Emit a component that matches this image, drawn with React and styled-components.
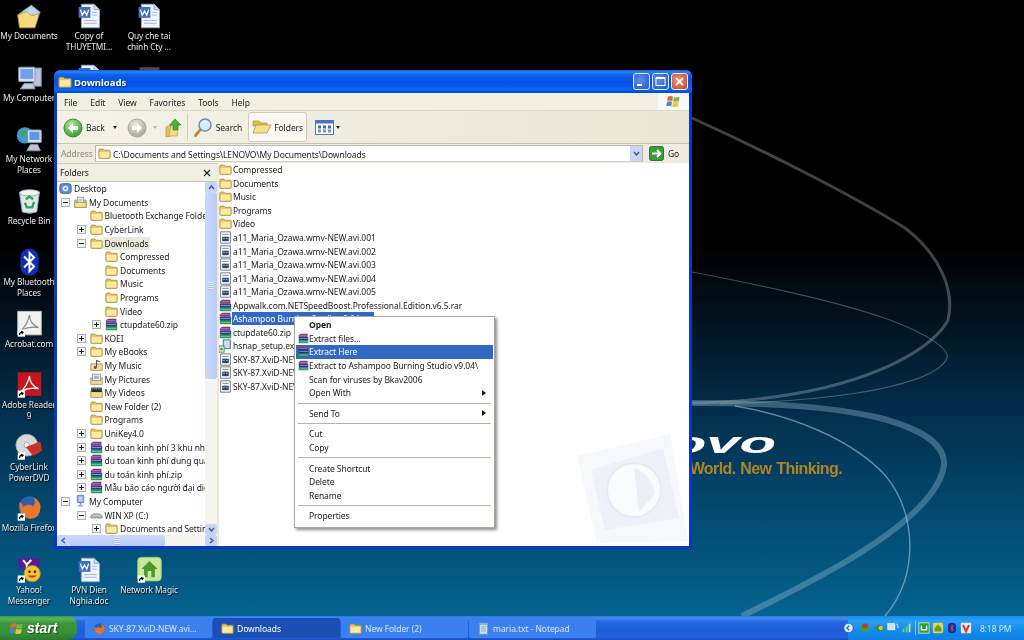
import React from "react";
import styled, { createGlobalStyle } from "styled-components";

const GlobalStyle = createGlobalStyle`
  html, body {
    margin: 0;
    padding: 0;
    background: #000;
  }
  * {
    box-sizing: border-box;
  }
`;

const uiFont = `"Noto Sans", "Liberation Sans", sans-serif`;

const Screen = styled.div`
  width: 1024px;
  height: 640px;
  display: flex;
  flex-direction: column;
  overflow: hidden;
  font-family: ${uiFont};
  font-size: 8.5px;
  letter-spacing: -0.07px;
  color: #1c1c1c;
  filter: blur(0.3px);
`;

const Desktop = styled.div`
  position: relative;
  flex: 1;
  background: linear-gradient(
    180deg,
    #000 0%,
    #000 40%,
    #021523 53%,
    #02304f 68%,
    #034a72 84%,
    #05638f 100%
  );
`;

const Wallpaper = styled.svg`
  position: absolute;
  left: 0;
  top: 0;
`;

const DeskIcon = styled.div`
  position: absolute;
  left: ${(p) => p.$x}px;
  top: ${(p) => p.$y}px;
  width: 58px;
  display: flex;
  flex-direction: column;
  align-items: center;
`;

const DeskLabel = styled.div`
  color: #e4e8ea;
  font-size: 8.3px;
  letter-spacing: -0.1px;
  line-height: 10.6px;
  text-align: center;
  white-space: nowrap;
  text-shadow: 1px 1px 1px #000;
`;

/* window */
const Win = styled.div`
  position: absolute;
  left: 54px;
  top: 70px;
  width: 638px;
  height: 479px;
  display: flex;
  flex-direction: column;
  background: #0a37c4;
  border-radius: 6px 6px 0 0;
  padding: 0 3px 3px;
`;

const TitleBar = styled.div`
  height: 23px;
  margin: 0 -3px;
  padding: 0 4px;
  display: flex;
  align-items: center;
  gap: 2px;
  border-radius: 6px 6px 0 0;
  background: linear-gradient(
    180deg,
    #0a53e0 0%,
    #2c86f5 8%,
    #0e62ec 20%,
    #0452e2 50%,
    #0559ef 72%,
    #0667fa 84%,
    #0349cc 100%
  );
`;

const TitleText = styled.div`
  flex: 1;
  padding-top: 2px;
  color: #fff;
  font-size: 9.5px;
  font-weight: 700;
  letter-spacing: 0;
  text-shadow: 1px 1px 1px #0a2a80;
`;

const WinButton = styled.div`
  width: 17px;
  height: 17px;
  border: 1px solid #e6eefc;
  border-radius: 3px;
  display: flex;
  align-items: center;
  justify-content: center;
  background: ${(p) =>
    p.$close
      ? "radial-gradient(circle at 40% 40%, #ea9170, #d5552e 80%)"
      : "radial-gradient(circle at 40% 40%, #5f90ee, #2a5fd8 80%)"};
`;

const MenuBar = styled.div`
  height: 18px;
  display: flex;
  align-items: center;
  padding-left: 7px;
  gap: 13px;
  background: #f1eee2;
  border-bottom: 1px solid #dcd8c6;
`;

const MenuLabel = styled.span`
  padding-top: 1px;
  color: #222;
`;

const LogoBox = styled.div`
  margin-left: auto;
  width: 31px;
  height: 100%;
  display: flex;
  align-items: center;
  justify-content: center;
  background: #fbfaf6;
`;

const Toolbar = styled.div`
  height: 33px;
  display: flex;
  align-items: center;
  padding-left: 6px;
  background: linear-gradient(90deg, #f4f2e8, #eeeadc 60%, #ebe7d6);
  border-bottom: 1px solid #c9c6b6;
`;

const ToolItem = styled.div`
  display: flex;
  align-items: center;
  gap: ${(p) => p.$gap ?? 3}px;
  margin-left: ${(p) => p.$ml ?? 0}px;
  padding-top: 1px;
  color: ${(p) => (p.$dim ? "#99978a" : "#222")};
`;

const ToolDivider = styled.div`
  width: 1px;
  height: 26px;
  margin-left: 5px;
  background: #d3cfbd;
`;

const PressedTool = styled.div`
  height: 30px;
  width: 59px;
  margin-left: 6px;
  display: flex;
  align-items: center;
  justify-content: center;
  gap: 2px;
  background: #f9f8f3;
  border: 1px solid #cfccbb;
  border-radius: 3px;
`;

const Caret = styled.span`
  width: 0;
  height: 0;
  border-left: 2.5px solid transparent;
  border-right: 2.5px solid transparent;
  border-top: 3px solid ${(p) => (p.$dim ? "#b5b3a6" : "#222")};
`;

const AddressBar = styled.div`
  height: 19px;
  display: flex;
  align-items: center;
  padding-left: 4px;
  background: #efecdf;
`;

const AddressLabel = styled.span`
  color: #8c8a7d;
  width: 34px;
`;

const AddressInput = styled.div`
  width: 548px;
  height: 17px;
  display: flex;
  align-items: center;
  gap: 2px;
  padding-left: 2px;
  background: #fff;
  border: 1px solid #b9b8ab;
  border-bottom-color: #cfcec4;
`;

const AddressText = styled.span`
  flex: 1;
  padding-top: 1px;
  color: #222;
`;

const DropButton = styled.div`
  width: 12px;
  height: 15px;
  display: flex;
  align-items: center;
  justify-content: center;
  background: #c9d6f4;
`;

const GoButton = styled.div`
  margin-left: 6px;
  display: flex;
  align-items: center;
  gap: 4px;
  color: #222;
`;

const Content = styled.div`
  position: relative;
  flex: 1;
  min-height: 0;
  display: flex;
  background: #fff;
`;

const FolderPane = styled.div`
  width: 160px;
  display: flex;
  flex-direction: column;
  background: #fff;
`;

const PaneHeader = styled.div`
  height: 19px;
  display: flex;
  align-items: center;
  justify-content: space-between;
  padding: 0 6px 0 3px;
  background: #f1eee2;
  border-top: 1px solid #cbcabe;
  border-bottom: 1px solid #c9c6b6;
`;

const PaneBody = styled.div`
  flex: 1;
  min-height: 0;
  display: flex;
`;

const Tree = styled.div`
  flex: 1;
  min-width: 0;
  overflow: hidden;
`;

const TreeRow = styled.div`
  height: 13.6px;
  display: flex;
  align-items: center;
  white-space: nowrap;
  padding-left: ${(p) => (p.$level === 0 ? 2 : 4 + 15.5 * (p.$level - 1))}px;
`;

const ToggleSlot = styled.div`
  width: 9px;
  height: 9px;
  margin-right: 4px;
  flex: none;
`;

const Toggle = styled.div`
  width: 9px;
  height: 9px;
  display: flex;
  align-items: center;
  justify-content: center;
  border: 1px solid #a9b0b8;
  background: #f4f3ee;
  color: #222;
`;

const NodeLabel = styled.span`
  padding: 0 2px;
  line-height: 13px;
  background: ${(p) => (p.$active ? "#ebe8da" : "transparent")};
`;

const VBar = styled.div`
  width: 12px;
  display: flex;
  flex-direction: column;
  background: #f5f4ee;
`;

const ScrollBtn = styled.div`
  height: ${(p) => p.$size ?? 11}px;
  width: ${(p) => (p.$wide ? "12px" : "auto")};
  flex: none;
  display: flex;
  align-items: center;
  justify-content: center;
  background: #c5d4fa;
  border-radius: 2px;
`;

const VThumb = styled.div`
  height: 186px;
  background: linear-gradient(90deg, #c9d8fd, #b9ccf8);
  border-radius: 2px;
  display: flex;
  align-items: center;
  justify-content: center;
`;

const Grip = styled.div`
  width: 6px;
  height: 8px;
  background: repeating-linear-gradient(180deg, #e8eefe 0 1px, #aabef0 1px 2px);
`;

const HBar = styled.div`
  height: 11px;
  display: flex;
  background: #f5f4ee;
`;

const HThumb = styled.div`
  width: 96px;
  background: linear-gradient(180deg, #c9d8fd, #b9ccf8);
  border-radius: 2px;
  display: flex;
  align-items: center;
  justify-content: center;
`;

const HTrack = styled.div`
  flex: 1;
`;

const Splitter = styled.div`
  width: 2px;
  background: #ece9d8;
`;

const FileList = styled.div`
  position: relative;
  flex: 1;
  overflow: hidden;
`;

const FileRow = styled.div`
  height: 13.55px;
  display: flex;
  align-items: center;
  white-space: nowrap;
`;

const FileName = styled.span`
  padding: 0 1px;
  line-height: 13px;
  color: ${(p) => (p.$selected ? "#fff" : "#1c1c1c")};
  background: ${(p) => (p.$selected ? "#316ac5" : "transparent")};
`;

const Watermark = styled.svg`
  position: absolute;
  right: 0;
  bottom: 0;
`;

/* context menu */
const ContextMenu = styled.div`
  position: absolute;
  left: 240px;
  top: 246px;
  width: 201px;
  padding: 1px 1px 4px;
  background: #fff;
  border: 1px solid #a9a79a;
  box-shadow: 2px 2px 3px rgba(0, 0, 0, 0.45);
`;

const MenuItem = styled.div`
  height: 13.6px;
  display: flex;
  align-items: center;
  padding-left: 13px;
  padding-right: 7px;
  white-space: nowrap;
  font-weight: ${(p) => (p.$bold ? 700 : 400)};
  background: ${(p) => (p.$hot ? "#316ac5" : "transparent")};
  color: ${(p) => (p.$hot ? "#fff" : "#1c1c1c")};
`;

const MenuGlyph = styled.div`
  width: 11px;
  margin-left: -11px;
  display: flex;
`;

const SubArrow = styled.span`
  margin-left: auto;
  width: 0;
  height: 0;
  border-top: 3px solid transparent;
  border-bottom: 3px solid transparent;
  border-left: 4px solid #111;
`;

const MenuSep = styled.div`
  height: 1px;
  margin: 3px 2px;
  background: #b7b5a8;
`;

/* taskbar */
const Taskbar = styled.div`
  height: 24px;
  flex: none;
  display: flex;
  align-items: stretch;
  background: linear-gradient(
    180deg,
    #2f78e8 0%,
    #3f8cf2 10%,
    #2467e0 24%,
    #1f5ed8 60%,
    #2262de 88%,
    #1a4dbd 100%
  );
`;

const StartButton = styled.div`
  width: 77px;
  display: flex;
  align-items: center;
  gap: 3px;
  padding-left: 9px;
  border-radius: 0 9px 9px 0;
  background: linear-gradient(180deg, #3f9a45 0%, #58b558 12%, #3c963e 30%, #37913a 70%, #2b7a30 100%);
  color: #fff;
  font-family: "Liberation Sans", sans-serif;
  font-size: 14px;
  letter-spacing: 0;
  font-weight: 700;
  font-style: italic;
  text-shadow: 1px 1px 1px #1a4a1a;
`;

const TaskList = styled.div`
  flex: 1;
  display: flex;
  align-items: center;
  padding-left: 8px;
  gap: 1px;
`;

const TaskButton = styled.div`
  width: 127px;
  height: 20px;
  display: flex;
  align-items: center;
  gap: 3px;
  padding-left: 8px;
  border-radius: 2px;
  color: ${(p) => (p.$active ? "#fff" : "#d7e5fb")};
  background: ${(p) => (p.$active ? "#1c4fb4" : "#3b80f0")};
`;

const Tray = styled.div`
  width: 176px;
  display: flex;
  align-items: center;
  gap: 2px;
  background: linear-gradient(180deg, #1a8cf0 0%, #27a0f7 20%, #128ceb 60%, #0f7fe0 100%);
`;

const TrayArrow = styled.svg`
  margin-left: -5px;
  margin-right: 3px;
  flex: none;
`;

const TraySep = styled.div`
  width: 1px;
  height: 14px;
  background: #7cc0f4;
`;

const Clock = styled.span`
  margin-left: 6px;
  white-space: nowrap;
  color: #d3e8fb;
`;

/* ---- drawings ---- */
const Folder = ({ s = 13 }) => (
  <svg width={s} height={s} viewBox="0 0 16 16" style={{ flex: "none" }}>
    <path d="M1 4 Q1 2.5 2.5 2.5 H6 L7.5 4 H14 Q15 4 15 5 V13 Q15 14 14 14 H2 Q1 14 1 13 Z" fill="#e9c25a" stroke="#a98a3c" />
    <path d="M2 6 H14 V13 H2 Z" fill="#fbe9a6" />
  </svg>
);

const Rar = ({ s = 13 }) => (
  <svg width={s} height={s} viewBox="0 0 16 16" style={{ flex: "none" }}>
    <path d="M1 3 L4 1 H14 V5 H1 Z" fill="#8a2a86" />
    <rect x="1" y="5.7" width="14" height="4.5" rx="1" fill="#2a3fa8" />
    <rect x="1" y="10.5" width="14" height="4.5" rx="1" fill="#1f9a58" />
    <path d="M2 3.4 H13 M2 8 H14 M2 12.8 H14" stroke="#e4e6d8" strokeWidth=".6" />
    <path d="M1 5.4 H14 M1 10.3 H15" stroke="#111" strokeWidth=".7" />
  </svg>
);

const AviFile = () => (
  <svg width="13" height="13" viewBox="0 0 16 16" style={{ flex: "none" }}>
    <path d="M2 1 H14 V15 H2 Z" fill="#fdfdfd" stroke="#5a6270" />
    <rect x="4" y="3.5" width="8" height="1.2" fill="#7c8aa0" />
    <rect x="4" y="7" width="8" height="5.5" fill="#2f4470" />
    <rect x="5.5" y="8.5" width="1.3" height="1.3" fill="#e8eefc" />
    <rect x="9" y="8.5" width="1.3" height="1.3" fill="#e8eefc" />
  </svg>
);

const SetupFile = () => (
  <svg width="14" height="14" viewBox="0 0 16 16" style={{ flex: "none", marginLeft: -1 }}>
    <rect x="6" y="1" width="8" height="10" fill="#cfe0f6" stroke="#44608c" />
    <rect x="1" y="8" width="6" height="7" fill="#eef4e4" stroke="#4a7a3a" />
    <circle cx="4" cy="11.5" r="1.6" fill="#3da04a" />
  </svg>
);

const DocsFolder = () => (
  <svg width="13" height="13" viewBox="0 0 16 16" style={{ flex: "none" }}>
    <path d="M1 5 H15 V14 H1 Z" fill="#efd17c" stroke="#a98a3c" />
    <rect x="4" y="1.5" width="8" height="9" fill="#f7f9fd" stroke="#7d8ca6" />
    <path d="M5.5 4 H10.5 M5.5 6 H10.5" stroke="#8ea3c7" />
    <path d="M1 8 H15 V14 H1 Z" fill="#f6e3a0" stroke="#a98a3c" />
  </svg>
);

const MusicFolder = () => (
  <svg width="13" height="13" viewBox="0 0 16 16" style={{ flex: "none" }}>
    <path d="M1 6 H15 V14 H1 Z" fill="#f3dc8e" stroke="#a98a3c" />
    <path d="M8 10 V2 L12 3.5" fill="none" stroke="#4a4f78" strokeWidth="1.3" />
    <circle cx="6.5" cy="10.5" r="1.8" fill="#4a4f78" />
  </svg>
);

const PicsFolder = () => (
  <svg width="13" height="13" viewBox="0 0 16 16" style={{ flex: "none" }}>
    <path d="M1 6 H15 V14 H1 Z" fill="#f3dc8e" stroke="#a98a3c" />
    <rect x="3" y="1.5" width="10" height="8" fill="#e6eef8" stroke="#7d8ca6" />
    <rect x="5" y="3.5" width="6" height="4" fill="#9db7dc" />
  </svg>
);

const VideosFolder = () => (
  <svg width="13" height="13" viewBox="0 0 16 16" style={{ flex: "none" }}>
    <path d="M1 6 H15 V14 H1 Z" fill="#f3dc8e" stroke="#a98a3c" />
    <rect x="1.5" y="2" width="13" height="5.5" fill="#2c2c2c" />
    <path d="M3 3.5 H13" stroke="#eee" strokeDasharray="1.2 1" />
  </svg>
);

const SmallComputer = () => (
  <svg width="13" height="14" viewBox="0 0 16 16" style={{ flex: "none" }}>
    <rect x="4" y="1" width="8" height="9" rx="1" fill="#7fa8e8" stroke="#5a79b0" />
    <rect x="5.5" y="2.5" width="5" height="6" fill="#b9d4fa" />
    <path d="M4 13 H12 L10 15 H6 Z" fill="#a9b2c0" />
    <rect x="7" y="10" width="2" height="3" fill="#8a94a6" />
  </svg>
);

const Drive = () => (
  <svg width="13" height="13" viewBox="0 0 16 16" style={{ flex: "none" }}>
    <path d="M1 9 L4 6 H12 L15 9 V11 H1 Z" fill="#c3c6c9" stroke="#7b7f84" />
    <path d="M2 10 H14" stroke="#8f9498" />
  </svg>
);

const DesktopGlyph = () => (
  <svg width="13" height="13" viewBox="0 0 16 16" style={{ flex: "none" }}>
    <rect x="1" y="2" width="14" height="12" rx="3" fill="#5d8fd0" stroke="#35598f" />
    <circle cx="8" cy="8" r="3.4" fill="#eef4fc" />
    <circle cx="8" cy="8" r="1.5" fill="#5d8fd0" />
  </svg>
);

const Chevron = ({ d = "up", c = "#4d6185" }) => {
  const points = {
    up: "2,6 4.5,3 7,6",
    down: "2,3 4.5,6 7,3",
    left: "6,2 3,4.5 6,7",
    right: "3,2 6,4.5 3,7",
  };
  return (
    <svg width="9" height="9" viewBox="0 0 9 9">
      <polyline points={points[d]} fill="none" stroke={c} strokeWidth="1.6" />
    </svg>
  );
};

const WinFlag = ({ s = 14 }) => (
  <svg width={s} height={s} viewBox="0 0 16 16" style={{ flex: "none" }}>
    <path d="M2 3 Q5 1.5 7.5 3 L6.6 7.6 Q4 6.4 1.2 7.6 Z" fill="#e2683a" />
    <path d="M8.4 3.2 Q11 4.6 14.6 2.6 L13.8 7.4 Q10.8 8.8 7.6 7.8 Z" fill="#7ab648" />
    <path d="M1 8.4 Q4 7.2 6.4 8.4 L5.6 13 Q3 11.8 .2 13 Z" fill="#4a86d8" />
    <path d="M7.4 8.6 Q10.6 9.6 13.6 8.2 L12.8 13 Q9.8 14.4 6.6 13.2 Z" fill="#f2c43a" />
  </svg>
);

const NavCircle = ({ on, flip }) => (
  <svg width="20" height="20" viewBox="0 0 20 20" style={{ flex: "none" }}>
    <defs>
      <radialGradient id={on ? "navOn" : "navOff"} cx="40%" cy="30%" r="75%">
        <stop offset="0" stopColor={on ? "#b4eaa0" : "#e8e8e4"} />
        <stop offset="1" stopColor={on ? "#2e9a2a" : "#a3a39f"} />
      </radialGradient>
    </defs>
    <circle cx="10" cy="10" r="9" fill={`url(#${on ? "navOn" : "navOff"})`} stroke={on ? "#3c8a36" : "#a6a6a2"} />
    <path
      d={flip ? "M10 5 L15 10 L10 15 V12 H5 V8 H10 Z" : "M10 5 L5 10 L10 15 V12 H15 V8 H10 Z"}
      fill="#fff"
    />
  </svg>
);

const UpFolder = () => (
  <svg width="18" height="20" viewBox="0 0 18 20" style={{ flex: "none" }}>
    <path d="M2 9 L7 7 V18 L2 19 Z" fill="#e9c25a" stroke="#a98a3c" strokeWidth=".6" />
    <path d="M7 7 H15 L13 18 H5 Z" fill="#f6de8e" stroke="#a98a3c" strokeWidth=".6" />
    <path d="M11 1 L17 7 H13.5 V12 H9 V7 H5.5 Z" fill="#4db03c" stroke="#2a7a22" strokeWidth=".6" />
  </svg>
);

const SearchGlyph = () => (
  <svg width="21" height="21" viewBox="0 0 21 21" style={{ flex: "none" }}>
    <path d="M7 13 L2.5 18.5" stroke="#c08a4a" strokeWidth="3" strokeLinecap="round" />
    <circle cx="12" cy="8" r="6" fill="#d7ecfa" stroke="#6f90b4" strokeWidth="1.6" />
    <path d="M9 6 Q11 4 14 5" stroke="#fff" fill="none" />
  </svg>
);

const FoldersGlyph = () => (
  <svg width="20" height="18" viewBox="0 0 20 18" style={{ flex: "none" }}>
    <path d="M1 3 H7 L9 5 H15 V8 H1 Z" fill="#e4bc55" stroke="#a98a3c" strokeWidth=".7" />
    <path d="M1 15 L4 7 H19 L15 15 Z" fill="#f8e08f" stroke="#a98a3c" strokeWidth=".7" />
  </svg>
);

const ViewsGlyph = () => (
  <svg width="19" height="15" viewBox="0 0 19 15" style={{ flex: "none" }}>
    <rect x=".5" y=".5" width="18" height="14" fill="#fbfbf7" stroke="#4d78b8" />
    <rect x=".5" y=".5" width="18" height="3" fill="#3f74c6" />
    {[3, 8, 13].map((x) =>
      [5.5, 9.5].map((y) => (
        <rect key={`${x}-${y}`} x={x} y={y} width="3" height="3" fill={y < 7 ? "#4a62c4" : "#7c8fd6"} />
      ))
    )}
  </svg>
);

const GoGlyph = () => (
  <svg width="15" height="15" viewBox="0 0 15 15" style={{ flex: "none" }}>
    <rect x=".5" y=".5" width="14" height="14" rx="2" fill="#3a9a3c" stroke="#2a7a30" />
    <path d="M3 7.5 H11 M8 4 L11.5 7.5 L8 11" fill="none" stroke="#fff" strokeWidth="1.8" />
  </svg>
);

const Shortcut = () => (
  <g>
    <rect x="3" y="22" width="8" height="8" fill="#fff" />
    <path d="M5 28 Q5 25 8 25 M6.5 24 L9 25 L7.5 27" stroke="#000" strokeWidth="1.2" fill="none" />
  </g>
);

const Big = ({ children }) => (
  <svg width="29" height="30" viewBox="0 0 32 32" style={{ flex: "none" }}>
    {children}
  </svg>
);

const BigMyDocs = () => (
  <Big>
    <path d="M4 14 L18 4 L28 12 L14 22 Z" fill="#bcd6f2" stroke="#7d9cc4" />
    <path d="M3 15 L13 11 L18 16 L27 13 L22 29 L5 29 Z" fill="#f6da80" stroke="#b89a46" />
  </Big>
);

const BigWord = () => (
  <Big>
    <path d="M7 3 H21 L27 9 V29 H7 Z" fill="#f2f5fb" stroke="#8fa2c4" />
    <path d="M21 3 V9 H27" fill="#cdd9ee" stroke="#8fa2c4" />
    <rect x="4" y="6" width="13" height="12" fill="#3f6ec4" />
    <path d="M6 9 L8 15 L10.5 10.5 L13 15 L15 9" fill="none" stroke="#fff" strokeWidth="1.4" />
    <path d="M10 21 H24 M10 24 H24 M19 12 H24 M19 15 H24" stroke="#9db0d2" />
  </Big>
);

const BigComputer = () => (
  <Big>
    <rect x="20" y="5" width="9" height="20" fill="#b9c3d9" stroke="#7f8aa3" />
    <rect x="4" y="4" width="18" height="16" rx="1" fill="#d9e2f2" stroke="#8492ad" />
    <rect x="6" y="6" width="14" height="11" fill="#6fa2e8" />
    <path d="M6 28 L10 22 H20 L22 28 Z" fill="#c5cde0" stroke="#8492ad" />
  </Big>
);

const BigNetwork = () => (
  <Big>
    <circle cx="11" cy="12" r="9" fill="#3f9ad8" />
    <path d="M5 8 Q10 5 13 9 Q10 14 6 12 Z M12 16 Q17 14 16 19 L12 20 Z" fill="#46a64a" />
    <rect x="14" y="6" width="15" height="14" rx="1" fill="#d9e2f2" stroke="#8492ad" />
    <rect x="16" y="8" width="11" height="9" fill="#5f97e4" />
    <path d="M13 29 L17 22 H25 L28 29 Z" fill="#b9c3d9" stroke="#8492ad" />
  </Big>
);

const BigBin = () => (
  <Big>
    <path d="M5 7 Q15 2 27 6 L24 28 Q16 31 8 28 Z" fill="#d9e8f0" stroke="#93aabb" />
    <ellipse cx="16" cy="7" rx="11" ry="3.5" fill="#eef5f8" stroke="#93aabb" />
    <path d="M12 14 L16 11 L20 14 M21 17 L19 23 H13 L11 18" fill="none" stroke="#3aa04a" strokeWidth="2.6" />
  </Big>
);

const BigBluetooth = () => (
  <Big>
    <rect x="6" y="1" width="20" height="30" rx="10" fill="#0f2fb8" />
    <path d="M10 10 L21 21 L16 26 V6 L21 11 L10 22" fill="none" stroke="#fff" strokeWidth="2.2" />
  </Big>
);

const BigAcrobat = () => (
  <Big>
    <rect x="3" y="2" width="26" height="26" fill="#f1f1ee" stroke="#bdbdb8" />
    <path d="M7 23 Q14 16 16 6 Q16 16 26 20 Q16 18 7 23 Z" fill="none" stroke="#8a8a86" strokeWidth="1.3" />
    <Shortcut />
  </Big>
);

const BigReader = () => (
  <Big>
    <rect x="3" y="2" width="26" height="26" fill="#c4161c" />
    <path d="M7 23 Q14 16 16 6 Q16 16 26 20 Q16 18 7 23 Z" fill="none" stroke="#fff" strokeWidth="1.4" />
    <Shortcut />
  </Big>
);

const BigDvd = () => (
  <Big>
    <circle cx="13" cy="14" r="12" fill="#d6d8dc" stroke="#9ea2a8" />
    <circle cx="13" cy="14" r="3" fill="#fff" stroke="#9ea2a8" />
    <path d="M12 16 L28 10 L30 20 L20 26 Z" fill="#c8322a" />
    <Shortcut />
  </Big>
);

const BigFirefox = () => (
  <Big>
    <circle cx="16" cy="15" r="12" fill="#2c5fae" />
    <path d="M5 10 Q4 26 17 28 Q29 27 28 13 Q26 6 20 4 Q24 10 20 14 Q14 10 9 15 Q9 11 5 10 Z" fill="#e8782a" />
    <Shortcut />
  </Big>
);

const BigYahoo = () => (
  <Big>
    <path d="M3 3 H28 L26 14 H5 Z" fill="#5a1a96" />
    <path d="M9 5 L13 10 L18 5 M13 10 V15" stroke="#fff" strokeWidth="2.2" fill="none" />
    <circle cx="19" cy="20" r="9" fill="#f6c52e" stroke="#b5831a" />
    <circle cx="16" cy="18" r="1.4" fill="#222" />
    <circle cx="22" cy="18" r="1.4" fill="#222" />
    <path d="M14 22 Q19 27 24 22 Z" fill="#c8322a" />
    <Shortcut />
  </Big>
);

const BigMagic = () => (
  <Big>
    <rect x="3" y="2" width="26" height="26" rx="4" fill="#c8e89a" stroke="#9cc46e" />
    <path d="M7 15 L16 6 L25 15 H22 V24 H18 V17 H14 V24 H10 V15 Z" fill="#4e9a2c" />
    <Shortcut />
  </Big>
);

const BigDim = () => (
  <Big>
    <rect x="5" y="3" width="22" height="26" fill="#4a4a4c" />
  </Big>
);

const FireGlyph = () => (
  <svg width="13" height="13" viewBox="0 0 16 16" style={{ flex: "none" }}>
    <circle cx="8" cy="8" r="6.5" fill="#2c5fae" />
    <path d="M2 6 Q1 14 8 15 Q15 14 14.5 7 Q13 3 10 2 Q12 6 9 7.5 Q6 5 4 8 Q4 6 2 6 Z" fill="#e8702a" />
  </svg>
);

const NoteGlyph = () => (
  <svg width="13" height="13" viewBox="0 0 16 16" style={{ flex: "none" }}>
    <path d="M3 2 H13 V15 H3 Z" fill="#cfe4f7" stroke="#6d94c0" />
    <rect x="3" y="1" width="10" height="2.5" fill="#7fb4e6" />
    <path d="M5 6 H11 M5 8.5 H11 M5 11 H11" stroke="#7d97b8" />
  </svg>
);

const TrayIcon = ({ children }) => (
  <svg width="12" height="14" viewBox="0 0 14 14" style={{ flex: "none" }}>
    {children}
  </svg>
);

/* ---- data ---- */
const deskIcons = [
  { x: 0, y: 1, Icon: BigMyDocs, lines: ["My Documents"] },
  { x: 60, y: 1, Icon: BigWord, lines: ["Copy of", "THUYETMI..."] },
  { x: 120, y: 1, Icon: BigWord, lines: ["Quy che tai", "chinh Cty ..."] },
  { x: 0, y: 63, Icon: BigComputer, lines: ["My Computer"] },
  { x: 60, y: 62, Icon: BigWord, lines: [] },
  { x: 120, y: 64, Icon: BigDim, lines: [] },
  { x: 0, y: 124, Icon: BigNetwork, lines: ["My Network", "Places"] },
  { x: 0, y: 186, Icon: BigBin, lines: ["Recycle Bin"] },
  { x: 0, y: 247, Icon: BigBluetooth, lines: ["My Bluetooth", "Places"] },
  { x: 0, y: 309, Icon: BigAcrobat, lines: ["Acrobat.com"] },
  { x: 0, y: 370, Icon: BigReader, lines: ["Adobe Reader", "9"] },
  { x: 0, y: 432, Icon: BigDvd, lines: ["CyberLink", "PowerDVD"] },
  { x: 0, y: 493, Icon: BigFirefox, lines: ["Mozilla Firefox"] },
  { x: 0, y: 555, Icon: BigYahoo, lines: ["Yahoo!", "Messenger"] },
  { x: 60, y: 555, Icon: BigWord, lines: ["PVN Dien", "Nghia.doc"] },
  { x: 120, y: 555, Icon: BigMagic, lines: ["Network Magic"] },
];

const treeRows = [
  { level: 0, Icon: DesktopGlyph, label: "Desktop" },
  { level: 1, toggle: "-", Icon: DocsFolder, label: "My Documents" },
  { level: 2, Icon: Folder, label: "Bluetooth Exchange Folder" },
  { level: 2, toggle: "+", Icon: Folder, label: "CyberLink" },
  { level: 2, toggle: "-", Icon: Folder, label: "Downloads", active: true },
  { level: 3, Icon: Folder, label: "Compressed" },
  { level: 3, Icon: Folder, label: "Documents" },
  { level: 3, Icon: Folder, label: "Music" },
  { level: 3, Icon: Folder, label: "Programs" },
  { level: 3, Icon: Folder, label: "Video" },
  { level: 3, toggle: "+", Icon: Rar, label: "ctupdate60.zip" },
  { level: 2, toggle: "+", Icon: Folder, label: "KOEI" },
  { level: 2, toggle: "+", Icon: Folder, label: "My eBooks" },
  { level: 2, Icon: MusicFolder, label: "My Music" },
  { level: 2, Icon: PicsFolder, label: "My Pictures" },
  { level: 2, Icon: VideosFolder, label: "My Videos" },
  { level: 2, Icon: Folder, label: "New Folder (2)" },
  { level: 2, Icon: Folder, label: "Programs" },
  { level: 2, toggle: "+", Icon: Folder, label: "UniKey4.0" },
  { level: 2, toggle: "+", Icon: Rar, label: "du toan kinh phí 3 khu nhà" },
  { level: 2, toggle: "+", Icon: Rar, label: "du toan kinh phí dung quất" },
  { level: 2, toggle: "+", Icon: Rar, label: "du toán kinh phí.zip" },
  { level: 2, toggle: "+", Icon: Rar, label: "Mẫu báo cáo người đại diện" },
  { level: 1, toggle: "-", Icon: SmallComputer, label: "My Computer" },
  { level: 2, toggle: "-", Icon: Drive, label: "WIN XP (C:)" },
  { level: 3, toggle: "+", Icon: Folder, label: "Documents and Settings" },
];

const files = [
  { Icon: Folder, name: "Compressed" },
  { Icon: Folder, name: "Documents" },
  { Icon: Folder, name: "Music" },
  { Icon: Folder, name: "Programs" },
  { Icon: Folder, name: "Video" },
  { Icon: AviFile, name: "a11_Maria_Ozawa.wmv-NEW.avi.001" },
  { Icon: AviFile, name: "a11_Maria_Ozawa.wmv-NEW.avi.002" },
  { Icon: AviFile, name: "a11_Maria_Ozawa.wmv-NEW.avi.003" },
  { Icon: AviFile, name: "a11_Maria_Ozawa.wmv-NEW.avi.004" },
  { Icon: AviFile, name: "a11_Maria_Ozawa.wmv-NEW.avi.005" },
  { Icon: Rar, name: "Appwalk.com.NETSpeedBoost.Professional.Edition.v6.5.rar" },
  { Icon: Rar, name: "Ashampoo Burning Studio v9.04.rar", selected: true },
  { Icon: Rar, name: "ctupdate60.zip" },
  { Icon: SetupFile, name: "hsnap_setup.exe" },
  { Icon: AviFile, name: "SKY-87.XviD-NEW.avi.001" },
  { Icon: AviFile, name: "SKY-87.XviD-NEW.avi.002" },
  { Icon: AviFile, name: "SKY-87.XviD-NEW.avi.003" },
];

const menuItems = [
  { label: "Open", bold: true },
  { label: "Extract files...", rar: true },
  { label: "Extract Here", rar: true, hot: true },
  { label: "Extract to Ashampoo Burning Studio v9.04\\", rar: true },
  { label: "Scan for viruses by Bkav2006" },
  { label: "Open With", sub: true },
  { sep: true },
  { label: "Send To", sub: true },
  { sep: true },
  { label: "Cut" },
  { label: "Copy" },
  { sep: true },
  { label: "Create Shortcut" },
  { label: "Delete" },
  { label: "Rename" },
  { sep: true },
  { label: "Properties" },
];

const tasks = [
  { Icon: FireGlyph, label: "SKY-87.XviD-NEW.avi..." },
  { Icon: Folder, label: "Downloads", active: true },
  { Icon: Folder, label: "New Folder (2)" },
  { Icon: NoteGlyph, label: "maria.txt - Notepad" },
];

const WallpaperArt = () => (
  <Wallpaper width="1024" height="616" viewBox="0 0 1024 616">
    <path
      d="M692 118 C780 158 860 200 905 228 C940 255 955 290 948 320 C935 345 890 372 823 388 C780 398 730 403 692 403"
      fill="none"
      stroke="#bfc7cc"
      strokeOpacity=".33"
      strokeWidth="3"
    />
    <path
      d="M692 272 C760 285 840 302 890 320 C930 335 950 350 947 358 C940 375 900 386 857 393 C810 400 760 403 720 404"
      fill="none"
      stroke="#c9d3d9"
      strokeOpacity=".32"
      strokeWidth="1.2"
    />
    <path
      d="M692 403 C760 403 825 405 880 418 C925 430 945 445 944 465 C940 495 900 530 840 565 C810 582 775 600 742 616"
      fill="none"
      stroke="#a8c8da"
      strokeOpacity=".34"
      strokeWidth="6"
    />
    <path
      d="M735 406 C790 415 850 438 885 475 C910 505 915 545 905 580 C900 595 892 608 885 616"
      fill="none"
      stroke="#a8d0e4"
      strokeOpacity=".55"
      strokeWidth="1.4"
    />
    <text
      transform="translate(776 453) scale(2 1)"
      textAnchor="end"
      fontFamily="Liberation Sans"
      fontWeight="700"
      fontStyle="italic"
      fontSize="30"
      fill="#fff"
    >
      lenovo
    </text>
    <text
      x="842"
      y="474"
      textAnchor="end"
      fontFamily="Liberation Sans"
      fontWeight="700"
      fontSize="16"
      letterSpacing="-.6"
      wordSpacing="1"
      fill="#b08420"
    >
      New World. New Thinking.
    </text>
  </Wallpaper>
);

const TreeNode = ({ level, toggle, Icon, label, active }) => (
  <TreeRow $level={level}>
    {level > 0 && (
      <ToggleSlot>
        {toggle && (
          <Toggle>
            <svg width="7" height="7" viewBox="0 0 7 7">
              <path d={toggle === "+" ? "M1 3.5 H6 M3.5 1 V6" : "M1 3.5 H6"} stroke="#222" />
            </svg>
          </Toggle>
        )}
      </ToggleSlot>
    )}
    <Icon />
    <NodeLabel $active={active}>{label}</NodeLabel>
  </TreeRow>
);

const App = () => (
  <>
    <GlobalStyle />
    <Screen>
      <Desktop>
        <WallpaperArt />
        {deskIcons.map(({ x, y, Icon, lines }, i) => (
          <DeskIcon key={i} $x={x} $y={y}>
            <Icon />
            <DeskLabel>
              {lines.map((line) => (
                <div key={line}>{line}</div>
              ))}
            </DeskLabel>
          </DeskIcon>
        ))}

        <Win>
          <TitleBar>
            <Folder s={14} />
            <TitleText>Downloads</TitleText>
            <WinButton>
              <svg width="11" height="11" viewBox="0 0 11 11">
                <rect x="1" y="8" width="5" height="2" fill="#fff" />
              </svg>
            </WinButton>
            <WinButton>
              <svg width="11" height="11" viewBox="0 0 11 11">
                <rect x="1" y="1.5" width="9" height="8" fill="none" stroke="#fff" />
                <rect x="1" y="1" width="9" height="2" fill="#fff" />
              </svg>
            </WinButton>
            <WinButton $close>
              <svg width="11" height="11" viewBox="0 0 11 11">
                <path d="M2 2 L9 9 M9 2 L2 9" stroke="#fff" strokeWidth="1.8" />
              </svg>
            </WinButton>
          </TitleBar>

          <MenuBar>
            {["File", "Edit", "View", "Favorites", "Tools", "Help"].map((m) => (
              <MenuLabel key={m}>{m}</MenuLabel>
            ))}
            <LogoBox>
              <WinFlag s={15} />
            </LogoBox>
          </MenuBar>

          <Toolbar>
            <ToolItem>
              <NavCircle on />
              <span>Back</span>
            </ToolItem>
            <ToolItem $ml={8}>
              <Caret />
            </ToolItem>
            <ToolItem $ml={10}>
              <NavCircle flip />
            </ToolItem>
            <ToolItem $ml={6}>
              <Caret $dim />
            </ToolItem>
            <ToolItem $ml={7}>
              <UpFolder />
            </ToolItem>
            <ToolDivider />
            <ToolItem $ml={5} $gap={2}>
              <SearchGlyph />
              <span>Search</span>
            </ToolItem>
            <PressedTool>
              <FoldersGlyph />
              <span>Folders</span>
            </PressedTool>
            <ToolItem $ml={8} $gap={2}>
              <ViewsGlyph />
              <Caret />
            </ToolItem>
          </Toolbar>

          <AddressBar>
            <AddressLabel>Address</AddressLabel>
            <AddressInput>
              <Folder s={13} />
              <AddressText>C:\Documents and Settings\LENOVO\My Documents\Downloads</AddressText>
              <DropButton>
                <Chevron d="down" />
              </DropButton>
            </AddressInput>
            <GoButton>
              <GoGlyph />
              <span>Go</span>
            </GoButton>
          </AddressBar>

          <Content>
            <FolderPane>
              <PaneHeader>
                <span>Folders</span>
                <svg width="8" height="8" viewBox="0 0 8 8">
                  <path d="M1 1 L7 7 M7 1 L1 7" stroke="#222" strokeWidth="1.2" />
                </svg>
              </PaneHeader>
              <PaneBody>
                <Tree>
                  {treeRows.map((row) => (
                    <TreeNode key={row.label + row.level} {...row} />
                  ))}
                </Tree>
                <VBar>
                  <ScrollBtn>
                    <Chevron d="up" />
                  </ScrollBtn>
                  <VThumb>
                    <Grip />
                  </VThumb>
                  <HTrack />
                  <ScrollBtn>
                    <Chevron d="down" />
                  </ScrollBtn>
                </VBar>
              </PaneBody>
              <HBar>
                <ScrollBtn $size={11} $wide>
                  <Chevron d="left" />
                </ScrollBtn>
                <HThumb>
                  <Grip />
                </HThumb>
                <HTrack />
                <ScrollBtn $size={11} $wide>
                  <Chevron d="right" />
                </ScrollBtn>
              </HBar>
            </FolderPane>
            <Splitter />
            <FileList>
              <Watermark width="116" height="112" viewBox="0 0 116 112">
                <path d="M4 22 L97 0 L115 107 L24 109 Z" fill="#f7f8fb" />
                <path d="M18 36 L90 14 L106 84 L32 96 Z" fill="#eff0f7" />
                <circle cx="61" cy="56" r="27" fill="#fafbfd" stroke="#e8e9f1" strokeWidth="2" />
                <path d="M61 34 L66 78 L82 60 Q80 42 61 34 Z" fill="#eceef5" />
              </Watermark>
              {files.map(({ Icon, name, selected }) => (
                <FileRow key={name}>
                  <Icon />
                  <FileName $selected={selected}>{name}</FileName>
                </FileRow>
              ))}
            </FileList>
          </Content>

          <ContextMenu>
            {menuItems.map((item, i) =>
              item.sep ? (
                <MenuSep key={i} />
              ) : (
                <MenuItem key={item.label} $bold={item.bold} $hot={item.hot}>
                  {item.rar && (
                    <MenuGlyph>
                      <Rar s={11} />
                    </MenuGlyph>
                  )}
                  {item.label}
                  {item.sub && <SubArrow />}
                </MenuItem>
              )
            )}
          </ContextMenu>
        </Win>
      </Desktop>

      <Taskbar>
        <StartButton>
          <WinFlag s={15} />
          start
        </StartButton>
        <TaskList>
          {tasks.map(({ Icon, label, active }) => (
            <TaskButton key={label} $active={active}>
              <Icon />
              {label}
            </TaskButton>
          ))}
        </TaskList>
        <Tray>
          <TrayArrow width="11" height="14" viewBox="0 0 14 14">
            <circle cx="7" cy="7" r="6" fill="#dbeafd" stroke="#1d5fc4" />
            <path d="M8 4 L5 7 L8 10" fill="none" stroke="#1d5fc4" strokeWidth="1.6" />
          </TrayArrow>
          <TrayIcon>
            <rect x="2" y="4" width="10" height="7" fill="#3aa04a" />
            <rect x="4" y="2" width="6" height="5" fill="#c8322a" />
          </TrayIcon>
          <TrayIcon>
            <path d="M1 7 L7 3 L13 7 L7 11 Z" fill="#3d8a3a" />
            <circle cx="9" cy="7" r="2.5" fill="#e6c32e" />
          </TrayIcon>
          <TrayIcon>
            <rect x="1" y="2" width="8" height="7" fill="#cfe0f6" stroke="#fff" />
            <path d="M11 2 Q13 4 13 7" stroke="#fff" fill="none" />
          </TrayIcon>
          <TrayIcon>
            <rect x="2" y="8" width="2" height="4" fill="#6cd06c" />
            <rect x="5.5" y="5" width="2" height="7" fill="#6cd06c" />
            <rect x="9" y="2" width="2" height="10" fill="#bfe8bf" />
          </TrayIcon>
          <TraySep />
          <TrayIcon>
            <rect x="1" y="1" width="12" height="12" fill="#2e9a3e" stroke="#cde8c8" />
            <path d="M4 4 V9 H10 V4" fill="none" stroke="#fff" strokeWidth="1.6" />
          </TrayIcon>
          <TrayIcon>
            <rect x="1" y="1" width="12" height="12" rx="2" fill="#e8d24a" />
            <path d="M3 7 L7 3 L11 7 V11 H3 Z" fill="#6a9a2a" />
          </TrayIcon>
          <TrayIcon>
            <rect x="2.5" y="1" width="9" height="12" rx="4" fill="#142a9a" />
            <path d="M5 5 L9 9 L7 11 V3 L9 5 L5 9" fill="none" stroke="#e64a4a" strokeWidth="1" />
          </TrayIcon>
          <TrayIcon>
            <rect x="1" y="1" width="12" height="12" rx="1" fill="#f4e8e4" />
            <path d="M3.5 3.5 L7 11 L10.5 3.5" fill="none" stroke="#d8322a" strokeWidth="2.2" />
          </TrayIcon>
          <Clock>8:18 PM</Clock>
        </Tray>
      </Taskbar>
    </Screen>
  </>
);

export default App;
